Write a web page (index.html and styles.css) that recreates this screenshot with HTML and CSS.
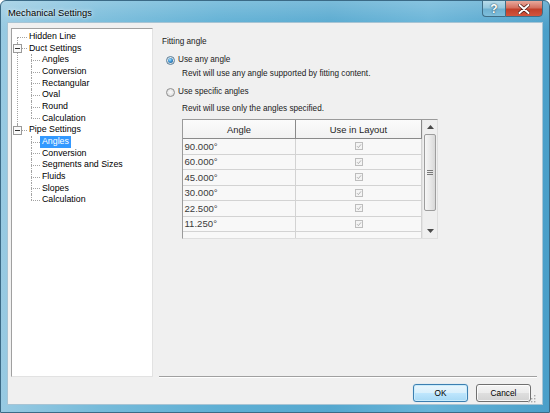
FILE: index.html
```html
<!DOCTYPE html>
<html>
<head>
<meta charset="utf-8">
<title>Mechanical Settings</title>
<link rel="stylesheet" href="styles.css">
</head>
<body>
<div class="window">
  <div class="titlebar">
    <span class="title">Mechanical Settings</span>
    <div class="caption-buttons">
      <div class="cap help">?</div>
      <div class="cap close">
        <svg width="12" height="10" viewBox="0 0 12 10"><path d="M1.5 1 L10.5 9 M10.5 1 L1.5 9" stroke="#4a1a14" stroke-width="3.4" stroke-linecap="round"/><path d="M1.5 1 L10.5 9 M10.5 1 L1.5 9" stroke="#ffffff" stroke-width="2" stroke-linecap="round"/></svg>
      </div>
    </div>
  </div>
  <div class="client">
    <div class="main">
      <div class="tree-panel">
        <ul class="tree">
          <li><span class="label">Hidden Line</span></li>
          <li>
            <span class="toggle"><svg width="9" height="9" viewBox="0 0 9 9"><rect x="0.5" y="0.5" width="8" height="8" fill="#fafafa" stroke="#9a9a9a"/><path d="M2 4.5 H7" stroke="#333" stroke-width="1"/></svg></span>
            <span class="label">Duct Settings</span>
            <ul class="children">
              <li><span class="label">Angles</span></li>
              <li><span class="label">Conversion</span></li>
              <li><span class="label">Rectangular</span></li>
              <li><span class="label">Oval</span></li>
              <li><span class="label">Round</span></li>
              <li><span class="label">Calculation</span></li>
            </ul>
          </li>
          <li>
            <span class="toggle"><svg width="9" height="9" viewBox="0 0 9 9"><rect x="0.5" y="0.5" width="8" height="8" fill="#fafafa" stroke="#9a9a9a"/><path d="M2 4.5 H7" stroke="#333" stroke-width="1"/></svg></span>
            <span class="label">Pipe Settings</span>
            <ul class="children">
              <li><span class="label selected">Angles</span></li>
              <li><span class="label">Conversion</span></li>
              <li><span class="label">Segments and Sizes</span></li>
              <li><span class="label">Fluids</span></li>
              <li><span class="label">Slopes</span></li>
              <li><span class="label">Calculation</span></li>
            </ul>
          </li>
        </ul>
      </div>
      <div class="content">
        <div class="group-title">Fitting angle</div>
        <div class="radio-row"><span class="radio checked"></span><span>Use any angle</span></div>
        <div class="desc">Revit will use any angle supported by fitting content.</div>
        <div class="radio-row second"><span class="radio"></span><span>Use specific angles</span></div>
        <div class="desc second">Revit will use only the angles specified.</div>
        <div class="grid">
          <div class="grid-body">
            <div class="grid-head">
              <div class="hc c1">Angle</div>
              <div class="hc c2">Use in Layout</div>
            </div>
            <div class="row"><div class="cell c1">90.000°</div><div class="cell c2"><span class="chk"><svg width="8" height="8" viewBox="0 0 8 8"><rect x="0.5" y="0.5" width="7" height="7" fill="#f4f4f4" stroke="#bdbdbd"/><path d="M2 4.2 L3.4 5.6 L6 2.4" fill="none" stroke="#a9a9a9" stroke-width="0.9"/></svg></span></div></div>
            <div class="row"><div class="cell c1">60.000°</div><div class="cell c2"><span class="chk"><svg width="8" height="8" viewBox="0 0 8 8"><rect x="0.5" y="0.5" width="7" height="7" fill="#f4f4f4" stroke="#bdbdbd"/><path d="M2 4.2 L3.4 5.6 L6 2.4" fill="none" stroke="#a9a9a9" stroke-width="0.9"/></svg></span></div></div>
            <div class="row"><div class="cell c1">45.000°</div><div class="cell c2"><span class="chk"><svg width="8" height="8" viewBox="0 0 8 8"><rect x="0.5" y="0.5" width="7" height="7" fill="#f4f4f4" stroke="#bdbdbd"/><path d="M2 4.2 L3.4 5.6 L6 2.4" fill="none" stroke="#a9a9a9" stroke-width="0.9"/></svg></span></div></div>
            <div class="row"><div class="cell c1">30.000°</div><div class="cell c2"><span class="chk"><svg width="8" height="8" viewBox="0 0 8 8"><rect x="0.5" y="0.5" width="7" height="7" fill="#f4f4f4" stroke="#bdbdbd"/><path d="M2 4.2 L3.4 5.6 L6 2.4" fill="none" stroke="#a9a9a9" stroke-width="0.9"/></svg></span></div></div>
            <div class="row"><div class="cell c1">22.500°</div><div class="cell c2"><span class="chk"><svg width="8" height="8" viewBox="0 0 8 8"><rect x="0.5" y="0.5" width="7" height="7" fill="#f4f4f4" stroke="#bdbdbd"/><path d="M2 4.2 L3.4 5.6 L6 2.4" fill="none" stroke="#a9a9a9" stroke-width="0.9"/></svg></span></div></div>
            <div class="row"><div class="cell c1">11.250°</div><div class="cell c2"><span class="chk"><svg width="8" height="8" viewBox="0 0 8 8"><rect x="0.5" y="0.5" width="7" height="7" fill="#f4f4f4" stroke="#bdbdbd"/><path d="M2 4.2 L3.4 5.6 L6 2.4" fill="none" stroke="#a9a9a9" stroke-width="0.9"/></svg></span></div></div>
            <div class="row"><div class="cell c1"></div><div class="cell c2"></div></div>
          </div>
          <div class="scrollbar">
            <div class="sb-btn"><svg width="7" height="4" viewBox="0 0 7 4"><path d="M0 4 L3.5 0 L7 4 Z" fill="#4a4a4a"/></svg></div>
            <div class="sb-thumb">
              <svg width="6" height="5" viewBox="0 0 6 5"><path d="M0 0.5 H6 M0 2.5 H6 M0 4.5 H6" stroke="#7a7a7a" stroke-width="1"/></svg>
            </div>
            <div class="sb-track"></div>
            <div class="sb-btn"><svg width="7" height="4" viewBox="0 0 7 4"><path d="M0 0 L3.5 4 L7 0 Z" fill="#4a4a4a"/></svg></div>
          </div>
        </div>
      </div>
    </div>
    <div class="footer">
      <div class="btn default">OK</div>
      <div class="btn">Cancel</div>
      <span class="grip"><svg width="8" height="8" viewBox="0 0 8 8"><g fill="#a9a9a9"><rect x="6" y="0" width="1.4" height="1.4"/><rect x="3" y="3" width="1.4" height="1.4"/><rect x="6" y="3" width="1.4" height="1.4"/><rect x="0" y="6" width="1.4" height="1.4"/><rect x="3" y="6" width="1.4" height="1.4"/><rect x="6" y="6" width="1.4" height="1.4"/></g></svg></span>
    </div>
  </div>
</div>
</body>
</html>
```

FILE: styles.css
```css
* { box-sizing: border-box; }

html, body {
  margin: 0;
  padding: 0;
  background: #ffffff;
}

body {
  font-family: "Liberation Sans", Arial, sans-serif;
  color: #000;
}

.window {
  width: 550px;
  height: 413px;
  border: 1px solid #3b6a86;
  border-radius: 6px 6px 0 0;
  padding: 0 6px 7px 6px;
  display: flex;
  flex-direction: column;
  background:
    linear-gradient(to bottom, rgba(255,255,255,0.22) 0px, rgba(255,255,255,0.04) 22px, rgba(255,255,255,0) 30px),
    linear-gradient(to right, #98cae2 0%, #76bbda 18%, #5eafd4 40%, #55a8cf 60%, #66b3d7 78%, #4a9fc9 100%);
}

.titlebar {
  height: 21px;
  display: flex;
  align-items: center;
  flex-shrink: 0;
}

.title {
  font-size: 9.4px;
  color: #000;
  padding-left: 1px;
  padding-top: 1px;
  text-shadow: 0 0 5px rgba(255,255,255,0.9), 0 0 2px rgba(255,255,255,0.7);
}

.caption-buttons {
  margin-left: auto;
  align-self: flex-start;
  margin-top: -1px;
  display: flex;
  height: 17px;
}

.cap {
  height: 17px;
  display: flex;
  align-items: center;
  justify-content: center;
  border: 1px solid #3f6e87;
}

.help {
  width: 23px;
  border-right: none;
  border-radius: 0 0 0 4px;
  background: linear-gradient(to bottom, #b7dbea 0%, #95c8de 45%, #6fb1d1 55%, #7fbfdc 100%);
  color: #fff;
  font-size: 12px;
  font-weight: bold;
  text-shadow: 0 0 2px #2d5569, 0 0 1px #2d5569;
}

.close {
  width: 38px;
  border-radius: 0 0 4px 0;
  background: linear-gradient(to bottom, #e9a99c 0%, #d4705f 45%, #c2402a 55%, #d2553d 100%);
}

.client {
  flex: 1;
  background: #f0f0f0;
  border: 1px solid #a7c4d4;
  padding: 5px 5px 0 3px;
  display: flex;
  flex-direction: column;
}

.main {
  height: 349px;
  display: flex;
  flex-shrink: 0;
}

/* ---------- Tree ---------- */
.tree-panel {
  width: 142px;
  background: #ffffff;
  border: 1px solid;
  border-color: #a0a0a0 #e2e2e2 #e2e2e2 #a0a0a0;
  padding-top: 2px;
  font-size: 8.8px;
}

.tree, .tree ul {
  list-style: none;
  margin: 0;
  padding: 0;
}

.tree li {
  position: relative;
  line-height: 11.65px;
}

.tree > li {
  padding-left: 15px;
}

.tree li::before {
  content: "";
  position: absolute;
  left: 5px;
  top: 5.8px;
  width: 10px;
  border-top: 1px dotted #a3a3a3;
}

.tree li::after {
  content: "";
  position: absolute;
  left: 5px;
  top: 0;
  bottom: 0;
  border-left: 1px dotted #a3a3a3;
}

.tree > li:first-child::after {
  top: 5.8px;
}

.tree li:last-child::after {
  bottom: auto;
  height: 5.8px;
}

.tree .children > li {
  padding-left: 13px;
}

.tree .children > li::before {
  left: 4px;
  width: 9px;
}

.tree .children > li::after {
  left: 4px;
}

.toggle {
  position: absolute;
  left: 1px;
  top: 1.3px;
  width: 9px;
  height: 9px;
  z-index: 1;
  display: flex;
}

.label {
  display: inline-block;
  padding: 0 2px;
  height: 11.65px;
  white-space: nowrap;
}

.label.selected {
  background: #3399ff;
  color: #ffffff;
}

/* ---------- Content ---------- */
.content {
  flex: 1;
  margin-left: 6px;
  padding: 8px 0 0 3px;
  border-bottom: 1px solid #a0a0a0;
  box-shadow: 0 1px 0 #ffffff;
  font-size: 8.2px;
  color: #1a1a1a;
}

.group-title {
  line-height: 12px;
  height: 12px;
}

.radio-row {
  margin-top: 6px;
  height: 12px;
  line-height: 12px;
  display: flex;
  align-items: center;
  padding-left: 4px;
}

.radio {
  width: 9px;
  height: 9px;
  border-radius: 50%;
  border: 1px solid #8f8f8f;
  background: radial-gradient(circle at 50% 45%, #fbfbfb 0%, #e6e6e6 55%, #cfcfcf 100%);
  margin-right: 3px;
  display: flex;
  align-items: center;
  justify-content: center;
  flex-shrink: 0;
}

.radio.checked {
  border-color: #5a7f9a;
}

.radio.checked::after {
  content: "";
  width: 5px;
  height: 5px;
  border-radius: 50%;
  background: radial-gradient(circle at 40% 35%, #a9e2ff 0%, #3d94d3 45%, #0f4f86 100%);
}

.desc {
  margin-top: 2px;
  height: 12px;
  line-height: 12px;
  padding-left: 20px;
  white-space: nowrap;
}

.radio-row.second {
  margin-top: 6px;
}

.desc.second {
  margin-top: 5px;
}

/* ---------- Grid ---------- */
.grid {
  margin-top: 4px;
  margin-left: 20px;
  width: 256px;
  height: 120px;
  border: 1px solid;
  border-color: #9a9a9a #dedede #dedede #9a9a9a;
  display: flex;
  overflow: hidden;
  background: #f9f9f9;
}

.grid-body {
  width: 239px;
  overflow: hidden;
}

.grid-head {
  display: flex;
  height: 19px;
  background: linear-gradient(to bottom, #fbfbfb, #f2f2f2);
  border-bottom: 1px solid #8a8a8a;
  font-size: 9.4px;
  color: #1e1e1e;
}

.hc {
  display: flex;
  align-items: center;
  justify-content: center;
  border-right: 1px solid #8a8a8a;
}

.c1 { width: 113px; }
.c2 { width: 126px; }

.row {
  display: flex;
  height: 15.5px;
  border-bottom: 1px solid #d3d3d3;
  background: #f8f8f8;
}

.cell {
  border-right: 1px solid #d3d3d3;
  display: flex;
  align-items: center;
  font-size: 9.6px;
  color: #3a3a3a;
}

.cell.c1 {
  padding-left: 1.5px;
}

.cell.c2 {
  justify-content: center;
}

.chk {
  display: flex;
  margin-left: 1px;
}

/* ---------- Scrollbar ---------- */
.scrollbar {
  width: 15px;
  display: flex;
  flex-direction: column;
  background: #efefef;
  border-left: 1px solid #e4e4e4;
  padding: 0 1px;
}

.sb-btn {
  height: 14px;
  display: flex;
  align-items: center;
  justify-content: center;
  flex-shrink: 0;
}

.sb-thumb {
  height: 77px;
  border: 1px solid #9d9d9d;
  border-radius: 2px;
  background: linear-gradient(to right, #f6f6f6 0%, #e9e9e9 50%, #d8d8d8 100%);
  display: flex;
  align-items: center;
  justify-content: center;
  flex-shrink: 0;
}

.sb-track {
  flex: 1;
}

/* ---------- Footer ---------- */
.footer {
  display: flex;
  justify-content: flex-end;
  align-items: flex-start;
  gap: 8px;
  padding-top: 7px;
  padding-right: 6px;
  flex: 1;
}

.btn {
  width: 55px;
  height: 18px;
  border: 1px solid #707070;
  border-radius: 3px;
  display: flex;
  align-items: center;
  justify-content: center;
  font-size: 8.3px;
  color: #000;
  background: linear-gradient(to bottom, #f4f4f4 0%, #ececec 48%, #dedede 52%, #d3d3d3 100%);
  box-shadow: inset 0 0 0 1px rgba(255,255,255,0.8);
}

.btn.default {
  border-color: #3c7fb1;
  background: linear-gradient(to bottom, #eaf6fd 0%, #d9f0fc 48%, #bee6fd 52%, #a7d9f5 100%);
  box-shadow: inset 0 0 0 1px #c9ecfc, 0 0 1px #7ec8ee;
}

.grip {
  align-self: flex-end;
  display: flex;
  margin: 0 -5px 1px -11px;
}
```
